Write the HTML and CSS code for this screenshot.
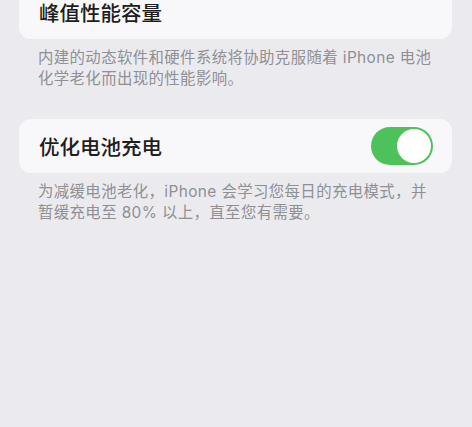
FILE: index.html
```html
<!DOCTYPE html>
<html lang="zh-CN">
<head>
    <meta charset="UTF-8">
    <meta name="viewport" content="width=device-width, initial-scale=1.0">
    <title>电池健康与充电</title>
    <link rel="stylesheet" href="styles.css">
</head>
<body>
    <div class="settings">
        <div class="group first">
            <div class="cell">
                <span class="cell-title">峰值性能容量</span>
            </div>
            <p class="footnote">内建的动态软件和硬件系统将协助克服随着 iPhone 电池<br>化学老化而出现的性能影响。</p>
        </div>
        <div class="group">
            <div class="cell">
                <span class="cell-title">优化电池充电</span>
                <div class="toggle on">
                    <div class="knob"></div>
                </div>
            </div>
            <p class="footnote">为减缓电池老化，iPhone 会学习您每日的充电模式，并<br>暂缓充电至 80% 以上，直至您有需要。</p>
        </div>
    </div>
</body>
</html>
```

FILE: styles.css
```css
body {
    margin: 0;
    background-color: #ebebef;
    font-family: "Inter", "Noto Sans CJK SC", sans-serif;
    height: 100vh;
    overflow: hidden;
}
.settings {
    padding: 0 20px 0 19px;
}
.group {
    margin-top: 30px;
}
.group.first {
    margin-top: -15px; /* list is scrolled, top of first cell is cut off */
}
.cell {
    display: flex;
    align-items: center;
    justify-content: space-between;
    height: 54px;
    padding: 0 19px 0 20px;
    background-color: #f8f8fa;
    border-radius: 12px;
}
.cell-title {
    font-size: 20.5px;
    font-weight: 500;
    color: #1e1e20;
}
.footnote {
    margin: 8px 0 0 0;
    padding-left: 19px;
    font-size: 15.4px;
    letter-spacing: 0.4px;
    line-height: 21px;
    color: #8f8f94;
    white-space: nowrap;
}
.toggle {
    width: 62px;
    height: 38px;
    border-radius: 19px;
    background-color: #e3e3e8;
    padding: 2px;
    box-sizing: border-box;
    display: flex;
}
.toggle.on {
    background-color: #4dc25b;
    justify-content: flex-end;
}
.knob {
    width: 34px;
    height: 34px;
    border-radius: 50%;
    background-color: #ffffff;
}
```
